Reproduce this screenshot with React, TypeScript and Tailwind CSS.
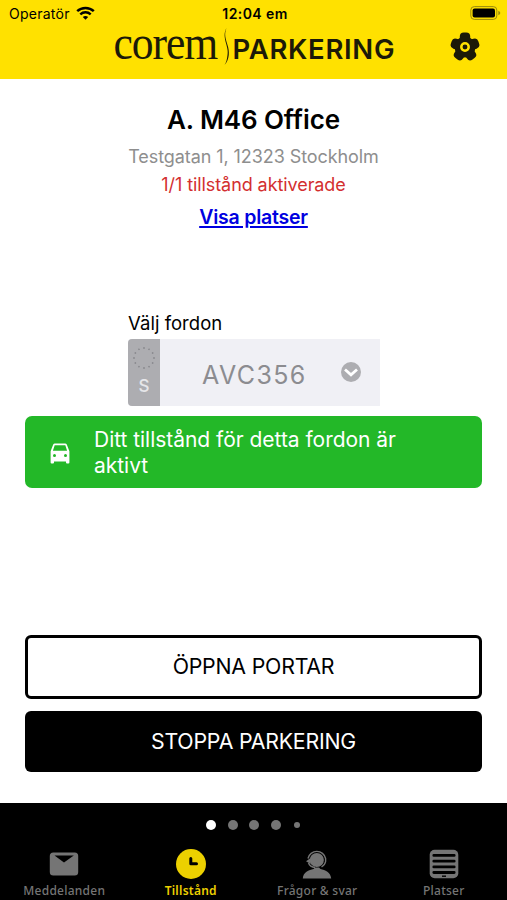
import type { ReactNode } from "react";

const TABS = [
  { id: "messages", label: "Meddelanden", icon: <MailIcon /> },
  { id: "permits", label: "Tillstånd", icon: <ClockIcon />, active: true },
  { id: "faq", label: "Frågor & svar", icon: <SupportIcon /> },
  { id: "places", label: "Platser", icon: <ListIcon /> },
];

export default function App() {
  return (
    <div className="flex h-[900px] w-[507px] flex-col bg-white font-['Inter','Liberation_Sans',sans-serif] text-black">
      <header className="h-[79px] bg-[#ffe100]">
        <StatusBar />
        <div className="flex h-[50px] items-start pl-[113px]">
          <Logo />
          <button type="button" aria-label="Inställningar" className="ml-[53px] mt-[4px]">
            <GearIcon />
          </button>
        </div>
      </header>

      <main className="flex h-[724px] flex-col px-[25px]">
        <section className="flex flex-col items-center pt-[23px]">
          <h1 className="text-[26px] leading-9 font-semibold tracking-[-0.1px]">A. M46 Office</h1>
          <p className="mt-[5px] text-[18px] leading-7 tracking-[-0.08px] text-[#8e8e8e]">
            Testgatan 1, 12323 Stockholm
          </p>
          <p className="text-[18px] leading-7 tracking-[-0.08px] text-[#d32f2f]">
            1/1 tillstånd aktiverade
          </p>
          <a
            href="#platser"
            className="mt-[4px] text-[19.5px] leading-7 font-semibold tracking-[-0.22px] text-[#0000e0] underline decoration-2 underline-offset-[2px]"
          >
            Visa platser
          </a>
        </section>

        <section className="mt-[78px] ml-[103px] w-[252px]">
          <div className="text-[18.5px] leading-7 tracking-[0.02px]">Välj fordon</div>
          <div className="mt-[2px] flex h-[67px] overflow-hidden rounded-l-[4px] bg-[#f0f0f5]">
            <div className="flex w-[32px] flex-col items-center bg-[#adadb1] pt-[7px]">
              <EuStars />
              <span className="mt-[6px] text-[17px] leading-5 font-medium text-[#e6e6e9]">S</span>
            </div>
            <div className="flex flex-1 items-center pl-[42px]">
              <span className="w-[139px] pt-[7px] text-[25px] tracking-[1.4px] text-[#8c8c90]">AVC356</span>
              <ChevronBadge />
            </div>
          </div>
        </section>

        <div className="mt-[10px] flex h-[72px] items-center rounded-[7px] bg-[#23b828] pl-[25px] text-white">
          <CarIcon />
          <p className="ml-[24px] w-[330px] pt-[2px] text-[21px] leading-[26px] tracking-[-0.03px]">
            Ditt tillstånd för detta fordon är aktivt
          </p>
        </div>

        <div className="mt-[147px] flex flex-col gap-3">
          <button
            type="button"
            className="h-[64px] rounded-[6px] border-3 border-black bg-white text-[21.3px] tracking-[-0.2px]"
          >
            ÖPPNA PORTAR
          </button>
          <button
            type="button"
            className="h-[61px] rounded-[6px] bg-black text-[21.3px] tracking-[-0.2px] text-white"
          >
            STOPPA PARKERING
          </button>
        </div>
      </main>

      <footer className="h-[97px] bg-black">
        <div className="flex h-[43px] items-center gap-[11.5px] pl-[206px]">
          <span className="size-[10px] rounded-full bg-white" />
          <span className="size-[10px] rounded-full bg-[#757575]" />
          <span className="size-[10px] rounded-full bg-[#757575]" />
          <span className="size-[10px] rounded-full bg-[#757575]" />
          <span className="ml-[2px] size-[6px] rounded-full bg-[#757575]" />
        </div>
        <nav className="flex pl-[1px]">
          {TABS.map((tab) => (
            <Tab key={tab.id} label={tab.label} active={tab.active}>
              {tab.icon}
            </Tab>
          ))}
        </nav>
      </footer>
    </div>
  );
}

function Tab({ label, active, children }: { label: string; active?: boolean; children: ReactNode }) {
  return (
    <div
      className={`flex w-[126.5px] flex-col items-center font-["Noto_Sans",sans-serif] ${
        active ? "font-semibold text-[#ecd000]" : "font-medium text-[#757575]"
      }`}
    >
      <div className="flex h-[35px] items-center">{children}</div>
      <span className="mt-[1px] text-[12px] leading-[18px] tracking-[0.25px] whitespace-nowrap">{label}</span>
    </div>
  );
}

function StatusBar() {
  return (
    <div className="grid h-[28px] grid-cols-3 items-center pr-[6px] pl-[9px] text-[14px]">
      <div className="flex items-center gap-[6px]">
        <span className="mb-[2px] tracking-[0.25px]">Operatör</span>
        <svg className="mb-[2px]" width="19" height="14" viewBox="0 0 19 14" fill="none">
          <path d="M1.2 5.2C5.8.8 13.2.8 17.8 5.2" stroke="#000" strokeWidth="2.5" />
          <path d="M4.3 8.4C7.3 5.6 11.7 5.6 14.7 8.4" stroke="#000" strokeWidth="2.4" />
          <path d="M6.8 10.9C8.4 9.6 10.6 9.6 12.2 10.9L9.5 13.7Z" fill="#000" />
        </svg>
      </div>
      <span className="mb-[2px] text-center font-semibold tracking-[0.4px]">12:04 em</span>
      <svg className="mb-[2px] justify-self-end" width="31" height="14" viewBox="0 0 31 14">
        <rect x=".8" y=".6" width="26" height="12.8" rx="3.5" fill="none" stroke="#9a8a0c" />
        <rect x="2.6" y="2.4" width="22.4" height="9.2" rx="2" fill="#000" />
        <path d="M28.3 4.7q2 .8 2 2.3t-2 2.3z" fill="#9a8a0c" />
      </svg>
    </div>
  );
}

function Logo() {
  return (
    <svg className="overflow-visible" width="284" height="42" viewBox="0 0 284 42" fill="#1c1a08">
      <text
        x="0.5"
        y="31"
        fontFamily="'Liberation Serif', serif"
        fontSize="48"
        letterSpacing="-1.2"
        textLength="103.500"
        lengthAdjust="spacingAndGlyphs"
      >
        corem
      </text>
      <path d="M113.500 0C108 9 116.500 19 114.500 27C114 31 113.500 34 111.500 37C117 31 116.500 23 114.500 17C112.500 10 111 6 113.500 0Z" />
      <text
        x="119.500"
        y="31"
        fontFamily="Inter, sans-serif"
        fontSize="27.500"
        fontWeight="600"
        textLength="162"
        lengthAdjust="spacing"
      >
        PARKERING
      </text>
    </svg>
  );
}

function GearIcon() {
  return (
    <svg width="30" height="30" viewBox="-15 -15 30 30" fill="#1c1a08">
      {[0, 72, 144, 216, 288].map((angle) => (
        <rect key={angle} x="-5.200" y="-14.500" width="10.400" height="13" rx="4" transform={`rotate(${angle})`} />
      ))}
      <circle r="10.500" />
      <circle r="3.700" fill="none" stroke="#ffe100" strokeWidth="2.500" />
    </svg>
  );
}

function EuStars() {
  return (
    <svg width="24" height="24" viewBox="-12 -12 24 24" fill="#88888d">
      {Array.from({ length: 12 }, (_, i) => (
        <circle key={i} cx="0" cy="-10" r="0.900" transform={`rotate(${i * 30})`} />
      ))}
    </svg>
  );
}

function ChevronBadge() {
  return (
    <svg className="mb-[1px]" width="20" height="20" viewBox="0 0 20 20">
      <circle cx="10" cy="10" r="10" fill="#adadb1" />
      <path d="M4 7.500L10 12.800L16 7.500" fill="none" stroke="#fff" strokeWidth="2.800" />
    </svg>
  );
}

function CarIcon() {
  return (
    <svg className="mt-[3px]" width="20" height="22" viewBox="0 0 20 22" fill="currentColor">
      <path
        fillRule="evenodd"
        d="M3.200 1.600Q3.700.5 4.900.5H15.100Q16.300.5 16.800 1.600L19.400 8.200V19.500Q19.400 20.500 18.400 20.500H17Q16 20.500 16 19.500V18.400H4V19.500Q4 20.500 3 20.500H1.600Q.6 20.500.6 19.500V8.200ZM4.700 2.300L2.900 7.700H17.100L15.300 2.300ZM4.500 11a1.500 1.500 0 1 0 0 3a1.500 1.500 0 1 0 0-3ZM15.500 11a1.500 1.500 0 1 0 0 3a1.500 1.500 0 1 0 0-3Z"
      />
    </svg>
  );
}

function MailIcon() {
  return (
    <svg width="30" height="30" viewBox="0 0 30 30">
      <rect x=".8" y="3.500" width="28.400" height="23" rx="3.500" fill="#757575" />
      <path d="M5.500 6.500H24.800L15 13.500Z" fill="#000" />
    </svg>
  );
}

function ClockIcon() {
  return (
    <svg width="30" height="30" viewBox="0 0 30 30">
      <circle cx="15" cy="15" r="15" fill="#ecd000" />
      <path d="M14.800 9.500V14.800H20.500" fill="none" stroke="#000" strokeWidth="3" strokeLinecap="round" strokeLinejoin="round" />
    </svg>
  );
}

function SupportIcon() {
  return (
    <svg width="30" height="30" viewBox="0 0 30 30" fill="#757575">
      <circle cx="14.800" cy="11" r="7.100" />
      <path d="M6 9.500A9 9 0 0 1 23.600 9.500V12.500Q23 16 19.500 18" fill="none" stroke="#757575" strokeWidth="1.400" />
      <path d="M4 12.200L8.500 9V15Z" />
      <path d="M6.500 14Q8 18 13 18.500" fill="none" stroke="#757575" strokeWidth="1.400" />
      <path d="M.8 29.500C1 23.500 7 20.800 11.500 20L13 18.500H17L18.500 20C23 20.800 28.800 23.500 29.200 29.500Z" />
    </svg>
  );
}

function ListIcon() {
  return (
    <svg width="30" height="30" viewBox="0 0 30 30">
      <rect x=".7" y=".7" width="28.600" height="28.600" rx="5" fill="#757575" />
      <path d="M4.800 6.400H25.200M4.800 12.200H25.200M4.800 17.900H25.200M4.800 23.500H25.200" stroke="#000" strokeWidth="2.800" strokeLinecap="round" />
      <path d="M13 27.200H17" stroke="#000" strokeWidth="1.400" />
    </svg>
  );
}
